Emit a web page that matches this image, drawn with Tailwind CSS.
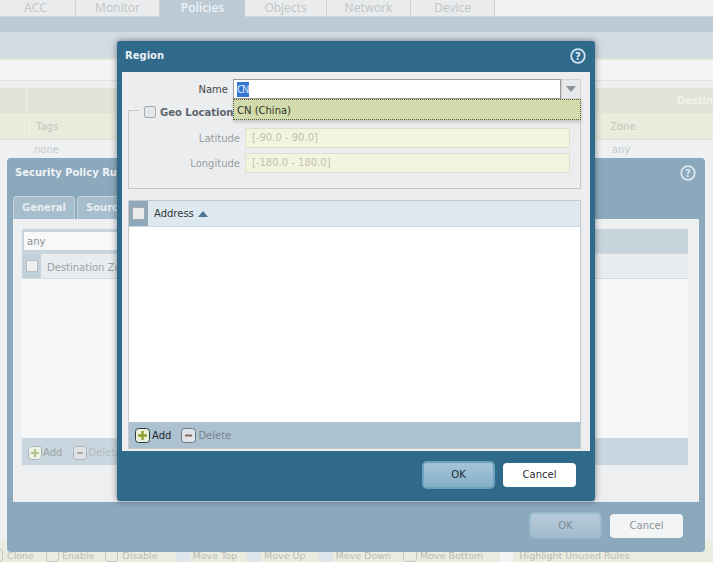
<!DOCTYPE html>
<html><head><meta charset="utf-8"><script src="https://cdn.jsdelivr.net/npm/@tailwindcss/browser@4"></script></head>
<body class="m-0">
<div class="relative w-[713px] h-[562px] overflow-hidden bg-[#eef0f1] font-['DejaVu_Sans',sans-serif] text-[10px] text-[#333]">

  <!-- background page -->
  <div class="flex flex-col h-full text-[#c3c7c9]">
    <div class="flex h-[17px] bg-[#f0f1f2] border-b border-[#d4d8da] text-[12px] font-['Open_Sans',sans-serif]">
      <div class="w-[76px] h-[16px] bg-[#e9ebec] border-r border-[#cfd3d5] flex items-center justify-center pr-[4px] text-[#bfc4c7]">ACC</div>
      <div class="w-[84px] h-[16px] bg-[#e9ebec] border-r border-[#cfd3d5] flex items-center justify-center text-[#bfc4c7]">Monitor</div>
      <div class="w-[85px] h-[19px] bg-[#bccad6] flex items-center justify-center font-semibold text-[#eef2f5] pb-[3px]">Policies</div>
      <div class="w-[82px] h-[16px] bg-[#e9ebec] border-r border-[#cfd3d5] flex items-center justify-center text-[#bfc4c7]">Objects</div>
      <div class="w-[84px] h-[16px] bg-[#e9ebec] border-r border-[#cfd3d5] flex items-center justify-center text-[#bfc4c7]">Network</div>
      <div class="w-[84px] h-[16px] bg-[#e9ebec] border-r border-[#cfd3d5] flex items-center justify-center text-[#bfc4c7]">Device</div>
    </div>
    <div class="h-[15px] bg-[#bccad6]"></div>
    <div class="h-[28px] bg-[#d0dbe3] border-b-2 border-[#e3e5dc]"></div>
    <div class="h-[21px] bg-[#f2f3f4] border-b border-[#e0e3dc]"></div>
    <div class="h-[25px] mt-[7px] bg-[#dfe4d6] flex items-center text-[#f1f3ee] font-semibold text-[10px] whitespace-nowrap">
      <div class="w-[30px] h-full border-r border-[#eceee6]"></div>
      <div class="ml-[574px] w-px h-full bg-[#eceee6]"></div>
      <span class="ml-[75px]">Destin</span>
    </div>
    <div class="h-[27px] bg-[#e8ecdd] flex items-center text-[#c2c6bb] text-[10px] border-b border-[#dfe2d8]">
      <div class="w-[30px] h-full border-r border-[#f0f2e8]"></div>
      <span class="ml-[6px]">Tags</span><span class="ml-[552px]">Zone</span>
    </div>
    <div class="h-[18px] flex items-center text-[#c7cbcd]"><span class="ml-[34px]">none</span><span class="ml-[553px]">any</span></div>
    <div class="flex-1"></div>
    <div class="h-[22px] bg-[#e9ecdf] flex items-end text-[#b8bcb4] text-[9.5px] leading-[12px] whitespace-nowrap">
      <div class="ml-[-10px] w-[13px] h-[13px] rounded-[3px] border border-[#c4c8c0]"></div><span class="ml-[4px]">Clone</span>
      <div class="ml-[12px] w-[13px] h-[13px] rounded-[3px] border border-[#c4c8c0]"></div><span class="ml-[3px]">Enable</span>
      <div class="ml-[11px] w-[13px] h-[13px] rounded-[3px] border border-[#c4c8c0]"></div><span class="ml-[4px]">Disable</span>
      <div class="ml-[18px] w-[14px] h-[13px] rounded-[3px] bg-[#dde5ea]"></div><span class="ml-[3px]">Move Top</span>
      <div class="ml-[10px] w-[14px] h-[13px] rounded-[3px] bg-[#dde5ea]"></div><span class="ml-[3px]">Move Up</span>
      <div class="ml-[13px] w-[14px] h-[13px] rounded-[3px] bg-[#dde5ea]"></div><span class="ml-[3px]">Move Down</span>
      <div class="ml-[12px] w-[14px] h-[13px] rounded-[3px] border border-[#c4c8c0]"></div><span class="ml-[3px]">Move Bottom</span>
      <div class="ml-[17px] w-[13px] h-[13px] bg-[#f3f4f1]"></div><span class="ml-[6px]">Highlight Unused Rules</span>
    </div>
  </div>

  <!-- Security Policy Rule window -->
  <div class="absolute left-[7px] top-[158px] w-[698px] h-[394px] bg-[#8ba8bc] rounded-[4px] flex flex-col">
    <div class="h-[38px] flex justify-between pl-[8px] pr-[9px] pt-[7px] font-bold text-[10px] text-[#eef3f6]">
      <span class="leading-[16px]">Security Policy Rule</span>
      <svg width="16" height="16" viewBox="0 0 16 16"><circle cx="8" cy="8" r="6.8" fill="#8ba8bc" stroke="#dbe8f0" stroke-width="1.8"/><text x="8" y="11.5" text-anchor="middle" font-size="10" font-weight="bold" fill="#dbe8f0" font-family="DejaVu Sans">?</text></svg>
    </div>
    <div class="flex gap-[2px] pl-[6px] h-[23px] font-bold text-[10px] text-[#e6edf2]">
      <div class="w-[62px] rounded-t-[4px] bg-[#a6bdcb] border border-b-0 border-[#c3d2dc] flex items-center justify-center pb-[2px]">General</div>
      <div class="w-[62px] rounded-t-[4px] bg-[#a6bdcb] border border-b-0 border-[#c3d2dc] flex items-center pl-[8px] pb-[2px]">Source</div>
    </div>
    <div class="ml-[6px] mr-[6px] h-[283px] bg-[#eeeff1] pt-[10px] pl-[9px] pr-[11px]">
      <div class="h-[236px] flex flex-col">
        <div class="h-[24px] bg-[#c8d4dc] pt-[3px] pl-[2px]"><div class="h-[18px] w-[200px] bg-[#f7f8f8] text-[#8b9095] pl-[3px] pt-[1px] leading-[18px]">any</div></div>
        <div class="h-[26px] flex items-center bg-[#e9ecee] border-y border-[#d3dade] text-[#9ba1a5]">
          <div class="w-[19px] h-full bg-[#c2d0da] flex items-center justify-center"><div class="w-[12px] h-[12px] bg-[#eceeef] border border-[#b7bcbf]"></div></div>
          <span class="ml-[6px] pt-[2px]">Destination Zone</span>
        </div>
        <div class="h-[159px] bg-[#f6f7f8]"></div>
        <div class="h-[27px] bg-[#c9d6df] flex items-center pl-[6px] pt-[2px] text-[#9aa2a7] gap-[1px]">
          <svg width="14" height="14" viewBox="0 0 14 14"><rect x=".5" y=".5" width="13" height="13" rx="3" fill="#eef1e6" stroke="#a9b3ba"/><path d="M7 3v8M3 7h8" stroke="#b5c387" stroke-width="2.2"/></svg>
          <span class="mr-[10px]">Add</span>
          <svg width="14" height="14" viewBox="0 0 14 14"><rect x=".5" y=".5" width="13" height="13" rx="3" fill="#dfe3e7" stroke="#a9b3ba"/><path d="M4 7h6" stroke="#b9a5a5" stroke-width="2"/></svg>
          <span class="text-[#b4bcc2]">Delete</span>
        </div>
      </div>
    </div>
    <div class="flex justify-end items-center gap-[8px] pr-[22px] pb-[3px] h-[50px] text-[10px]">
      <div class="w-[73px] h-[27px] rounded-[5px] bg-gradient-to-b from-[#b7cbd9] to-[#a0bccd] border-2 border-[#99b8cb] flex items-center justify-center text-[#7e8d97]">OK</div>
      <div class="w-[73px] h-[24px] rounded-[4px] bg-[#f2f4f5] flex items-center justify-center text-[#8b9298]">Cancel</div>
    </div>
  </div>

  <!-- Region window -->
  <div class="absolute left-[117px] top-[41px] w-[478px] h-[460px] bg-[#2f6a8b] rounded-[3px] shadow-[0_0_6px_rgba(40,50,60,0.6)] flex flex-col">
    <div class="h-[31px] flex justify-between items-center pl-[8px] pr-[9px] pb-[1px] font-bold text-[10px] text-[#eaf1f5]">
      <span class="pb-[1px]">Region</span>
      <svg width="16" height="16" viewBox="0 0 16 16"><circle cx="8" cy="8" r="6.8" fill="#2f6a8b" stroke="#cfe5f3" stroke-width="1.8"/><text x="8" y="11.5" text-anchor="middle" font-size="10" font-weight="bold" fill="#e4f0f7" font-family="DejaVu Sans">?</text></svg>
    </div>
    <div class="relative mx-[5px] h-[379px] bg-[#ebedef] px-[6px] pt-[7px]">
      <div class="flex items-center h-[20px]">
        <span class="w-[100px] text-right text-[#444]">Name</span>
        <div class="ml-[5px] w-[328px] h-[20px] bg-white border border-[#9b9b9b] flex items-center pl-[3px] text-[#333]"><span class="bg-[#3575d3] text-[#dbe8fb] w-[12px] tracking-[-2px] whitespace-nowrap">CN</span></div>
        <div class="w-[20px] h-[20px] bg-[#e6e8ea] border border-[#d0d3d5] flex items-center justify-center"><div class="w-0 h-0 border-x-[5px] border-x-transparent border-t-[6px] border-t-[#8f9599]"></div></div>
      </div>
      <div class="relative mt-[11px] h-[79px] border border-[#c6c9cc] w-[453px]">
        <div class="absolute -top-[6px] left-[10px] flex items-center gap-[4px] bg-[#ebedef] pl-[5px] pr-[2px] h-[14px] font-bold text-[#5d666e] text-[10px]">
          <div class="w-[12px] h-[12px] rounded-[2px] bg-[#e4e6e8] border border-[#a4a9ad]"></div><span>Geo Location</span>
        </div>
        <div class="flex items-center h-[20px] mt-[17px]">
          <span class="w-[111px] text-right text-[#9a9ea1]">Latitude</span>
          <div class="ml-[5px] w-[325px] h-[20px] bg-[#f3f4dd] border border-[#dfdfd0] pl-[6px] leading-[18px] text-[#c0c3b6]">[-90.0 - 90.0]</div>
        </div>
        <div class="flex items-center h-[20px] mt-[5px]">
          <span class="w-[111px] text-right text-[#9a9ea1]">Longitude</span>
          <div class="ml-[5px] w-[325px] h-[20px] bg-[#f3f4dd] border border-[#dfdfd0] pl-[6px] leading-[18px] text-[#c0c3b6]">[-180.0 - 180.0]</div>
        </div>
      </div>
      <div class="mt-[11px] w-[453px] h-[249px] border border-[#c6c9cc] flex flex-col">
        <div class="h-[26px] bg-[#dde8ef] flex items-center border-b border-[#c8d6df] text-[#33383c]">
          <div class="w-[19px] h-full bg-[#8fa9bb] flex items-center justify-center"><div class="w-[13px] h-[13px] bg-[#e9ebec] border border-[#a4a9ad]"></div></div>
          <span class="ml-[6px]">Address</span>
          <div class="ml-[4px] w-0 h-0 border-x-[5px] border-x-transparent border-b-[6px] border-b-[#4f7596]"></div>
        </div>
        <div class="flex-1 bg-white"></div>
        <div class="h-[26px] bg-[#acc2d1] flex items-center pl-[6px]">
          <svg width="15" height="15" viewBox="0 0 15 15"><rect x=".5" y=".5" width="14" height="14" rx="3" fill="#e9f0dc" stroke="#2c3c46"/><path d="M7.5 3v9M3 7.5h9" stroke="#8f9f32" stroke-width="2.4"/></svg>
          <span class="ml-[2px] mr-[10px] text-[#1f262c]">Add</span>
          <svg width="15" height="15" viewBox="0 0 15 15"><rect x=".5" y=".5" width="14" height="14" rx="3" fill="#dfe4e8" stroke="#6b7780"/><path d="M4 7.5h7" stroke="#8a6565" stroke-width="2"/></svg>
          <span class="ml-[2px] text-[#75848f]">Delete</span>
        </div>
      </div>
      <!-- dropdown list -->
      <div class="absolute left-[111px] top-[27px] w-[348px] h-[21px] bg-[#d2dbab] border border-dotted border-[#55583f] shadow-[0_2px_3px_rgba(80,80,80,0.25)] flex items-center pl-[3px] pt-[1px] text-[#2f3128]">CN (China)</div>
    </div>
    <div class="flex-1 flex justify-end items-center gap-[8px] pr-[19px] pb-[3px] text-[10px]">
      <div class="w-[73px] h-[28px] rounded-[5px] bg-gradient-to-b from-[#a4c4d8] to-[#86b0c9] border-2 border-[#6da0bd] flex items-center justify-center text-[#1d2a33]">OK</div>
      <div class="w-[73px] h-[24px] rounded-[4px] bg-white flex items-center justify-center text-[#2a2f33]">Cancel</div>
    </div>
  </div>
</div>
</body></html>
